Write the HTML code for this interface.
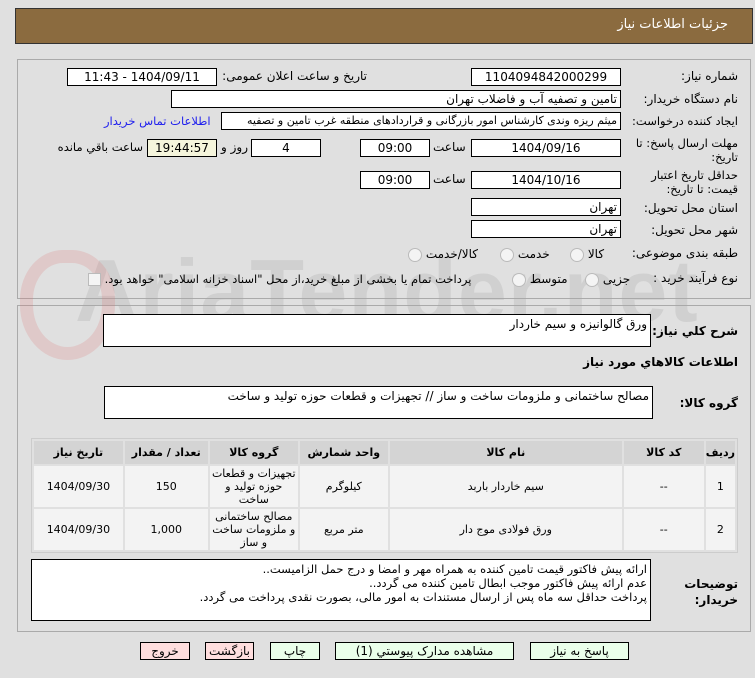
<!DOCTYPE html>
<html><head><meta charset="utf-8"><style>
body{margin:0;width:755px;height:678px;background:#e0e0e0;font-family:"DejaVu Sans",sans-serif;font-size:12px;color:#000;position:relative;overflow:hidden}
.a{position:absolute}
.box{position:absolute;background:#fff;border:1px solid #000;box-sizing:border-box;font-size:12px;direction:rtl;padding:0 3px;white-space:nowrap;overflow:hidden}
.c{text-align:center}
.l{position:absolute;direction:rtl;white-space:nowrap;font-size:12px}
.b{font-weight:bold}
.btn{position:absolute;top:642px;height:18px;border:1px solid #000;box-sizing:border-box;background:#eaffea;font-size:12px;text-align:center;line-height:16px;direction:rtl}
.pk{background:#ffdede}
table{position:absolute;left:31px;top:438px;width:707px;border-collapse:separate;border-spacing:2px;background:#e0e0e0;border:1px solid #ccc}
td{background:#f3f3f3;text-align:center;font-size:11px;line-height:13px;direction:rtl;padding:0 1px}
th{background:#d4d4d4;height:23px;font-size:11px;direction:rtl;padding:0}
.rd{display:inline-block;width:12px;height:12px;border-radius:50%;border:1px solid #bbb;background:#f4f4f4;vertical-align:middle}
</style></head><body>
<div class="a" style="left:15px;top:8px;width:738px;height:36px;background:#8b6b3f;border:1px solid #333;box-sizing:border-box"></div>
<div class="l" style="right:27px;top:17px;color:#fff;font-size:13px">جزئیات اطلاعات نیاز</div>
<div class="a" style="left:17px;top:59px;width:734px;height:240px;border:1px solid #aaa;box-sizing:border-box"></div>
<div class="a" style="left:17px;top:305px;width:734px;height:327px;border:1px solid #aaa;box-sizing:border-box"></div>
<div class="a" style="left:75px;top:240px;font-size:88px;font-weight:bold;color:rgba(170,170,170,.28);font-family:'Liberation Sans',sans-serif;letter-spacing:1px">AriaTender.net</div>
<div class="a" style="left:20px;top:250px;width:95px;height:110px;border-radius:45% 45% 50% 50%;border:13px solid rgba(220,120,120,.22);box-sizing:border-box"></div>

<div class="l" style="right:17px;top:69px">شماره نیاز:</div>
<div class="box c" style="left:471px;top:68px;width:150px;height:18px;line-height:16px">1104094842000299</div>
<div class="l" style="right:388px;top:69px">تاریخ و ساعت اعلان عمومی:</div>
<div class="box c" style="left:67px;top:68px;width:150px;height:18px;line-height:16px">1404/09/11 - 11:43</div>

<div class="l" style="right:17px;top:92px">نام دستگاه خریدار:</div>
<div class="box" style="left:171px;top:90px;width:450px;height:18px;line-height:16px">تامین و تصفیه آب و فاضلاب تهران</div>

<div class="l" style="right:17px;top:114px;font-size:11.5px">ایجاد کننده درخواست:</div>
<div class="box" style="left:221px;top:112px;width:400px;height:18px;line-height:16px;font-size:11px">میثم ریزه وندی کارشناس امور بازرگانی و قراردادهای منطقه غرب تامین و تصفیه</div>
<div class="l" style="left:104px;top:114px;color:#2020ee;font-size:11.5px">اطلاعات تماس خریدار</div>

<div class="l" style="right:17px;top:136px;line-height:14px;text-align:right;font-size:11.5px">مهلت ارسال پاسخ: تا<br>تاریخ:</div>
<div class="box c" style="left:471px;top:139px;width:150px;height:18px;line-height:16px">1404/09/16</div>
<div class="l" style="left:433px;top:140px">ساعت</div>
<div class="box c" style="left:360px;top:139px;width:70px;height:18px;line-height:16px">09:00</div>
<div class="box c" style="left:251px;top:139px;width:70px;height:18px;line-height:16px">4</div>
<div class="l" style="left:221px;top:140px">روز و</div>
<div class="box c" style="left:147px;top:139px;width:70px;height:18px;line-height:16px;background:#f5f5dc">19:44:57</div>
<div class="l" style="right:612px;top:140px;font-size:11.5px">ساعت باقي مانده</div>

<div class="l" style="right:17px;top:168px;line-height:14px;text-align:right;font-size:11.5px">حداقل تاریخ اعتبار<br>قیمت: تا تاریخ:</div>
<div class="box c" style="left:471px;top:171px;width:150px;height:18px;line-height:16px">1404/10/16</div>
<div class="l" style="left:433px;top:172px">ساعت</div>
<div class="box c" style="left:360px;top:171px;width:70px;height:18px;line-height:16px">09:00</div>

<div class="l" style="right:17px;top:201px">استان محل تحویل:</div>
<div class="box" style="left:471px;top:198px;width:150px;height:18px;line-height:16px">تهران</div>
<div class="l" style="right:17px;top:223px">شهر محل تحویل:</div>
<div class="box" style="left:471px;top:220px;width:150px;height:18px;line-height:16px">تهران</div>

<div class="l" style="right:17px;top:246px">طبقه بندی موضوعی:</div>
<div class="l" style="left:570px;top:247px">کالا <span class="rd"></span></div>
<div class="l" style="left:500px;top:247px">خدمت <span class="rd"></span></div>
<div class="l" style="left:408px;top:247px">کالا/خدمت <span class="rd"></span></div>

<div class="l" style="right:17px;top:271px">نوع فرآیند خرید :</div>
<div class="l" style="left:585px;top:272px">جزیی <span class="rd"></span></div>
<div class="l" style="left:512px;top:272px">متوسط <span class="rd"></span></div>
<div class="l" style="left:88px;top:272px;font-size:11.5px">پرداخت تمام یا بخشی از مبلغ خرید،از محل "اسناد خزانه اسلامی" خواهد بود. <span style="display:inline-block;width:11px;height:11px;border:1px solid #bbb;background:#f4f4f4;vertical-align:middle"></span></div>

<div class="l b" style="right:17px;top:324px">شرح کلي نياز:</div>
<div class="box" style="left:103px;top:314px;width:548px;height:33px;padding-top:2px">ورق گالوانیزه و سیم خاردار</div>
<div class="l b" style="right:17px;top:355px">اطلاعات کالاهاي مورد نياز</div>
<div class="l b" style="right:17px;top:396px">گروه کالا:</div>
<div class="box" style="left:104px;top:386px;width:549px;height:33px;padding-top:2px">مصالح ساختمانی و ملزومات ساخت و ساز // تجهیزات و قطعات حوزه تولید و ساخت</div>

<table dir="rtl">
<tr><th style="width:28px">ردیف</th><th style="width:80px">کد کالا</th><th style="width:232px">نام کالا</th><th style="width:88px">واحد شمارش</th><th style="width:88px">گروه کالا</th><th style="width:83px">تعداد / مقدار</th><th>تاریخ نیاز</th></tr>
<tr style="height:41px"><td>1</td><td>--</td><td>سیم خاردار باربد</td><td>کیلوگرم</td><td>تجهیزات و قطعات حوزه تولید و ساخت</td><td>150</td><td>1404/09/30</td></tr>
<tr style="height:41px"><td>2</td><td>--</td><td>ورق فولادی موج دار</td><td>متر مربع</td><td>مصالح ساختمانی و ملزومات ساخت و ساز</td><td>1,000</td><td>1404/09/30</td></tr>
</table>

<div class="l b" style="right:17px;top:576px;line-height:16px;text-align:right">توضیحات<br>خریدار:</div>
<div class="box" style="left:31px;top:559px;width:620px;height:62px;padding-top:2px;line-height:14px;font-size:11.5px">ارائه پیش فاکتور قیمت تامین کننده به همراه مهر و امضا و درج حمل الزامیست..<br>عدم ارائه پیش فاکتور موجب ابطال تامین کننده می گردد..<br>پرداخت حداقل سه ماه پس از ارسال مستندات به امور مالی، بصورت نقدی پرداخت می گردد.</div>

<div class="btn" style="left:530px;width:99px">پاسخ به نیاز</div>
<div class="btn" style="left:335px;width:179px">مشاهده مدارک پیوستي (1)</div>
<div class="btn" style="left:270px;width:50px">چاپ</div>
<div class="btn pk" style="left:205px;width:49px">بازگشت</div>
<div class="btn pk" style="left:140px;width:50px">خروج</div>
</body></html>
